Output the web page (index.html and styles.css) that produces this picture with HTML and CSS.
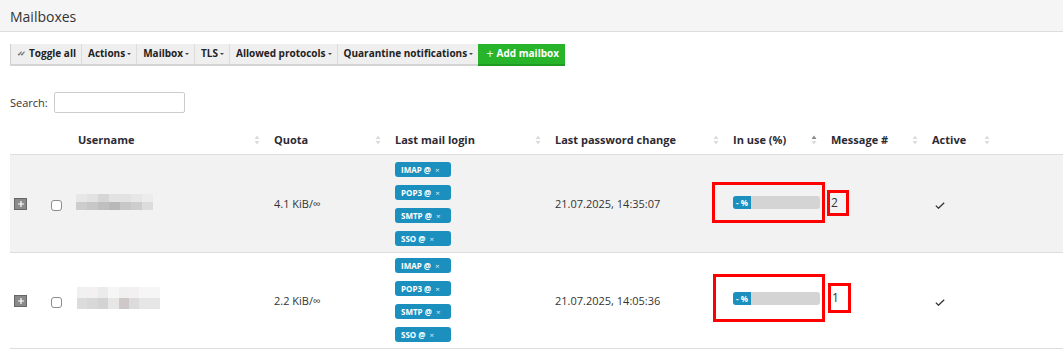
FILE: index.html
```html
<!DOCTYPE html>
<html lang="en">
<head>
    <meta charset="UTF-8">
    <title>Mailboxes</title>
    <link rel="stylesheet" href="styles.css">
</head>
<body>
<!-- Page heading -->
<div class="page-head">
    <h1>Mailboxes</h1>
</div>

<div class="panel">
    <!-- Toolbar -->
    <div class="toolbar">
        <button class="tb-btn"><span class="dbl-check">&#10003;&#10003;</span>Toggle all</button>
        <button class="tb-btn">Actions<span class="caret"></span></button>
        <button class="tb-btn">Mailbox<span class="caret"></span></button>
        <button class="tb-btn">TLS<span class="caret"></span></button>
        <button class="tb-btn">Allowed protocols<span class="caret"></span></button>
        <button class="tb-btn">Quarantine notifications<span class="caret"></span></button>
        <button class="tb-btn btn-add"><span class="plus">+</span>Add mailbox</button>
    </div>

    <div class="search">
        <label>Search:</label>
        <input type="text">
    </div>

    <!-- Mailbox table -->
    <table class="mbox-table">
        <colgroup>
            <col class="c-exp">
            <col class="c-chk">
            <col class="c-user">
            <col class="c-quota">
            <col class="c-login">
            <col class="c-pw">
            <col class="c-inuse">
            <col class="c-msg">
            <col class="c-active">
            <col class="c-rest">
        </colgroup>
        <thead>
            <tr>
                <th></th>
                <th></th>
                <th><div class="th-in"><span>Username</span><svg class="sort" viewBox="0 0 6 12"><polygon points="0.5,5 3,1.5 5.5,5"/><polygon points="0.5,7 3,10.5 5.5,7"/></svg></div></th>
                <th><div class="th-in"><span>Quota</span><svg class="sort" viewBox="0 0 6 12"><polygon points="0.5,5 3,1.5 5.5,5"/><polygon points="0.5,7 3,10.5 5.5,7"/></svg></div></th>
                <th><div class="th-in"><span>Last mail login</span><svg class="sort" viewBox="0 0 6 12"><polygon points="0.5,5 3,1.5 5.5,5"/><polygon points="0.5,7 3,10.5 5.5,7"/></svg></div></th>
                <th><div class="th-in"><span>Last password change</span><svg class="sort" viewBox="0 0 6 12"><polygon points="0.5,5 3,1.5 5.5,5"/><polygon points="0.5,7 3,10.5 5.5,7"/></svg></div></th>
                <th><div class="th-in"><span>In use (%)</span><svg class="sort sort-asc" viewBox="0 0 6 12"><polygon class="on" points="0.5,5 3,1.5 5.5,5"/><polygon points="0.5,7 3,10.5 5.5,7"/></svg></div></th>
                <th><div class="th-in"><span>Message #</span><svg class="sort" viewBox="0 0 6 12"><polygon points="0.5,5 3,1.5 5.5,5"/><polygon points="0.5,7 3,10.5 5.5,7"/></svg></div></th>
                <th><div class="th-in"><span>Active</span><svg class="sort" viewBox="0 0 6 12"><polygon points="0.5,5 3,1.5 5.5,5"/><polygon points="0.5,7 3,10.5 5.5,7"/></svg></div></th>
                <th></th>
            </tr>
        </thead>
        <tbody>
            <tr class="odd">
                <td class="c-exp"><span class="expand"><svg viewBox="0 0 8 8"><path d="M4 1v6M1 4h6"/></svg></span></td>
                <td class="c-chk"><input type="checkbox" class="chk"></td>
                <td>
                    <div class="blur">
                        <i class="g1"></i><i class="g2"></i><i class="g4"></i><i class="g2"></i><i class="g2"></i><i class="g1"></i><i class="g0"></i>
                        <i class="g5"></i><i class="g6"></i><i class="g7"></i><i class="g8"></i><i class="g6"></i><i class="g5"></i><i class="g3"></i>
                    </div>
                </td>
                <td>4.1 KiB/&infin;</td>
                <td class="c-badges">
                    <span class="badge">IMAP @ <span class="x">&times;</span></span>
                    <span class="badge">POP3 @ <span class="x">&times;</span></span>
                    <span class="badge">SMTP @ <span class="x">&times;</span></span>
                    <span class="badge">SSO @ <span class="x">&times;</span></span>
                </td>
                <td>21.07.2025, 14:35:07</td>
                <td>
                    <span class="mark mark-bar">
                        <span class="progress"><span class="progress-bar">- %</span></span>
                    </span>
                </td>
                <td><span class="mark mark-num">2</span></td>
                <td><svg class="tick" viewBox="0 0 10 7"><path d="M0.8 3.6l2.7 2.6L9.2 0.8"/></svg></td>
                <td></td>
            </tr>
            <tr class="even">
                <td class="c-exp"><span class="expand"><svg viewBox="0 0 8 8"><path d="M4 1v6M1 4h6"/></svg></span></td>
                <td class="c-chk"><input type="checkbox" class="chk"></td>
                <td>
                    <div class="blur blur-wide">
                        <i class="h1"></i><i class="h2"></i><i class="h3"></i><i class="h0"></i><i class="h1"></i><i class="h2"></i><i class="h0"></i><i class="h0"></i>
                        <i class="h5"></i><i class="h6"></i><i class="h7"></i><i class="h4"></i><i class="h8"></i><i class="h5"></i><i class="h4"></i><i class="h4"></i>
                    </div>
                </td>
                <td>2.2 KiB/&infin;</td>
                <td class="c-badges">
                    <span class="badge">IMAP @ <span class="x">&times;</span></span>
                    <span class="badge">POP3 @ <span class="x">&times;</span></span>
                    <span class="badge">SMTP @ <span class="x">&times;</span></span>
                    <span class="badge">SSO @ <span class="x">&times;</span></span>
                </td>
                <td>21.07.2025, 14:05:36</td>
                <td>
                    <span class="mark mark-bar mark-tall">
                        <span class="progress"><span class="progress-bar">- %</span></span>
                    </span>
                </td>
                <td><span class="mark mark-num mark-num-tall">1</span></td>
                <td><svg class="tick" viewBox="0 0 10 7"><path d="M0.8 3.6l2.7 2.6L9.2 0.8"/></svg></td>
                <td></td>
            </tr>
        </tbody>
    </table>
</div>
</body>
</html>
```

FILE: styles.css
```css
/* General Page Styling */
body {
    font-family: 'Open Sans', 'Noto Sans', sans-serif;
    font-size: 11px;
    color: #333;
    margin: 0;
    padding: 0;
    background-color: #fff;
}

/* Heading bar */
.page-head {
    height: 31px;
    background-color: #f5f5f5;
    border-bottom: 1px solid #ddd;
    padding-left: 10px;
}

.page-head h1 {
    margin: 0;
    font-size: 14px;
    font-weight: normal;
    line-height: 33px;
    color: #333;
}

.panel {
    padding: 12px 0 0 10px;
}

/* Toolbar */
.toolbar {
    display: flex;
    height: 22px;
}

.tb-btn {
    display: flex;
    align-items: center;
    height: 22px;
    padding: 0 5px 2px 6px;
    border: none;
    border-left: 1px solid #dcdcdc;
    border-bottom: 2px solid #d4d4d4;
    background-color: #efefef;
    font-family: inherit;
    font-size: 10px;
    font-weight: bold;
    color: #222;
    cursor: pointer;
}

.tb-btn:first-child {
    border-left: 1px solid #d0d0d0;
}

.dbl-check {
    font-size: 7px;
    color: #666;
    margin-right: 3px;
    letter-spacing: -3px;
    padding-right: 3px;
}

.caret {
    display: inline-block;
    margin-left: 2px;
    margin-top: 2px;
    border-top: 2px solid #444;
    border-left: 2px solid transparent;
    border-right: 2px solid transparent;
}

.btn-add {
    background-color: #28b42a;
    border-left: none;
    border-bottom: 2px solid #1f9a22;
    color: #fff;
    padding: 0 6px 2px 8px;
}

.btn-add .plus {
    font-weight: normal;
    font-size: 13px;
    margin-right: 3px;
    color: #e6f7e6;
}

/* Search */
.search {
    display: flex;
    align-items: center;
    margin-top: 26px;
}

.search label {
    margin-right: 6px;
    font-size: 11px;
}

.search input {
    width: 131px;
    height: 21px;
    box-sizing: border-box;
    border: 1px solid #ccc;
    border-radius: 2px;
}

/* Table */
.mbox-table {
    width: 1053px;
    table-layout: fixed;
    border-collapse: collapse;
    margin-top: 12px;
}

.c-exp { width: 30px; }
.c-chk { width: 30px; }
.c-user { width: 196px; }
.c-quota { width: 121px; }
.c-login { width: 160px; }
.c-pw { width: 178px; }
.c-inuse { width: 98px; }
.c-msg { width: 101px; }
.c-active { width: 72px; }
.c-rest { width: 67px; }

.mbox-table th {
    height: 29px;
    padding: 0 8px;
    text-align: left;
    font-weight: bold;
    color: #2a2a35;
    border-bottom: 1px solid #ddd;
}

.th-in {
    display: flex;
    align-items: center;
    justify-content: space-between;
}

.sort {
    width: 6px;
    height: 12px;
    margin-right: -2px;
    fill: #dcdcdc;
}

.sort-asc .on { fill: #8a8a8a; }

.mbox-table td {
    padding: 0 8px;
    vertical-align: middle;
    border-bottom: 1px solid #ddd;
}

.mbox-table tr.odd td { background-color: #f2f2f2; }
.mbox-table tr.even td { background-color: #fff; }

.mbox-table td.c-exp { padding: 0 0 0 4px; }
.mbox-table td.c-chk { padding: 0 0 0 11px; }

.mbox-table td.c-badges { padding-top: 7px; padding-bottom: 6px; }
.mbox-table tr.even td.c-badges { padding-top: 5px; padding-bottom: 6px; }

/* Row bits */
.expand {
    display: flex;
    align-items: center;
    justify-content: center;
    width: 13px;
    height: 12px;
    box-sizing: border-box;
    background-color: #8a8a8a;
    border: 1px solid #666;
    margin-top: 1px;
}

.expand svg {
    width: 8px;
    height: 8px;
    stroke: #fff;
    stroke-width: 1.2;
}

.chk {
    appearance: none;
    width: 11px;
    height: 11px;
    margin: 3px 0 0 0;
    border: 1px solid #8c8c8c;
    border-radius: 3px;
    background-color: #fff;
    display: block;
}

/* Pixelated (hidden) user names */
.blur {
    display: grid;
    grid-template-columns: repeat(7, 11px);
    grid-auto-rows: 8px;
    margin: -4px 0 0 -2px;
}

.blur-wide {
    grid-template-columns: repeat(8, 10.4px);
    grid-auto-rows: 11px;
    margin: -5px 0 0 -1px;
}

.g0 { background: #ececec; }
.g1 { background: #e7e7e7; }
.g2 { background: #e2e2e2; }
.g3 { background: #dcdcdc; }
.g4 { background: #d6d6d6; }
.g5 { background: #cdcdcd; }
.g6 { background: #c7c7c7; }
.g7 { background: #bfbfbf; }
.g8 { background: #b8b8b8; }

.h0 { background: #f6f6f6; }
.h1 { background: #f0f0f0; }
.h2 { background: #f2f0f0; }
.h3 { background: #ebebeb; }
.h4 { background: #e6e6e6; }
.h5 { background: #dcdcdc; }
.h6 { background: #d8d8d8; }
.h7 { background: #d3d3d3; }
.h8 { background: #cfc8c8; }

.badge {
    display: block;
    width: 56px;
    height: 15px;
    box-sizing: border-box;
    padding-left: 6px;
    margin-bottom: 8px;
    border-radius: 3px;
    background-color: #1b8fbe;
    color: #fff;
    font-size: 8px;
    font-weight: bold;
    line-height: 15px;
    white-space: nowrap;
}

.badge:last-child { margin-bottom: 0; }

.badge .x {
    font-weight: normal;
    margin-left: 2px;
    opacity: 0.85;
}

/* Progress */
.progress {
    display: flex;
    width: 87px;
    height: 13px;
    border-radius: 3px;
    background-color: #d4d4d4;
    overflow: hidden;
}

.progress-bar {
    width: 18px;
    background-color: #1b8fbe;
    color: #fff;
    font-size: 8px;
    font-weight: bold;
    line-height: 13px;
    text-align: center;
}

/* Red review marks */
.mark {
    display: inline-block;
    border: 3px solid #f00;
    vertical-align: middle;
}

.mark-bar {
    padding: 11px 2px 11px 18px;
    margin: -2px 0 0 -21px;
}

.mark-tall {
    padding: 15px 2px 14px 17px;
    margin: -5px 0 0 -20px;
}

.mark-num {
    width: 22px;
    height: 26px;
    box-sizing: border-box;
    padding-left: 1px;
    margin: -2px 0 0 -4px;
    line-height: 20px;
    font-size: 12px;
}

.mark-num-tall {
    width: 23px;
    height: 30px;
    line-height: 24px;
    margin: -5px 0 0 -3px;
}

.tick {
    width: 10px;
    height: 7px;
    margin: 3px 0 0 3px;
    fill: none;
    stroke: #333;
    stroke-width: 1.3;
    display: block;
}
```
